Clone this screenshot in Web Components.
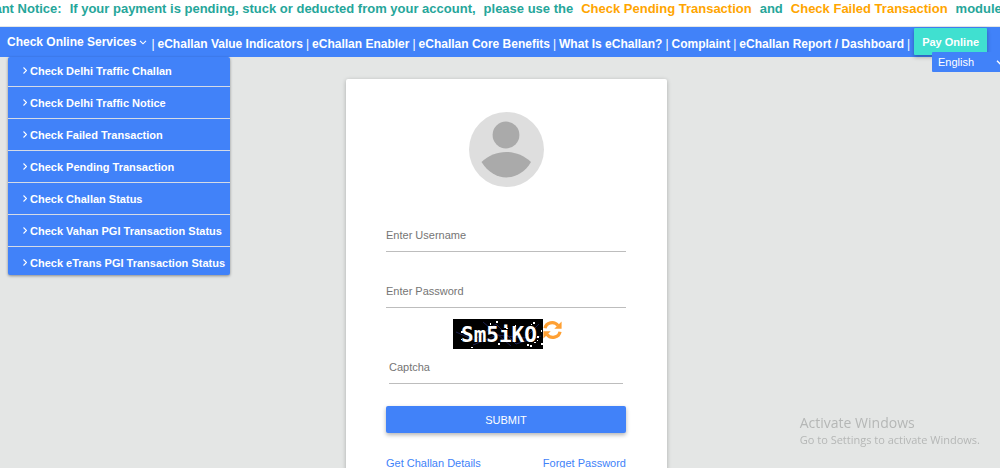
<!DOCTYPE html>
<html lang="en">
<head>
<meta charset="utf-8">
<meta name="viewport" content="width=device-width, initial-scale=1">
<title>eChallan Login</title>
<style>
html, body { margin: 0; height: 100%; }
body { font-family: "Liberation Sans", Arial, sans-serif; font-size: 12px; background: #e4e6e5; overflow: hidden; --blue: #4182f9; }
</style>
</head>
<body>
<echallan-page></echallan-page>
<script>
const define = (name, html, setup) => {
  const t = document.createElement('template');
  t.innerHTML = html;
  customElements.define(name, class extends HTMLElement {
    constructor() {
      super();
      this.attachShadow({ mode: 'open' }).append(t.content.cloneNode(true));
    }
    connectedCallback() { if (setup) setup(this, this.shadowRoot); }
  });
};

define('notice-bar', `
<style>
:host { display: block; height: 27px; background: #fff; color: #26a69a; font-size: 13px; font-weight: bold; line-height: 18px; white-space: nowrap; overflow: hidden; box-sizing: border-box; border-bottom: 1px solid #e4e6e5; }
p { display: flex; gap: 8px; margin: 0 0 0 -46px; }
a { color: #ffa500; text-decoration: none; }
</style>
<p><span>Important Notice:</span><span>If your payment is pending, stuck or deducted from your account,</span><span>please use the</span><a href="#pending">Check Pending Transaction</a><span>and</span><a href="#failed">Check Failed Transaction</a><span>modules</span></p>`);

define('menu-item', `
<style>
:host { display: block; border-bottom: 1px solid #d5dbe6; }
:host(:last-of-type) { border-bottom: 0; }
a { display: flex; align-items: center; gap: 3px; height: 31px; box-sizing: border-box; padding-left: 15px; color: #fff; font-size: 11px; font-weight: bold; text-decoration: none; white-space: nowrap; }
:host(:first-of-type) a { height: 29px; padding-bottom: 2px; }
:host(:last-of-type) a { height: 28px; padding-top: 3px; }
svg { width: 4px; height: 7px; fill: none; stroke: #fff; stroke-width: 1.1; }
</style>
<a href="#service"><svg viewBox="0 0 4 7"><path d="M.5.5l3 3-3 3"/></svg><slot></slot></a>`);

define('services-menu', `
<style>
:host { display: block; position: relative; }
button { display: flex; align-items: center; gap: 3px; border: 0; padding: 0; background: none; color: #fff; font: bold 12px/30px "Liberation Sans", Arial, sans-serif; white-space: nowrap; }
svg { width: 8px; height: 5px; fill: none; stroke: #fff; stroke-width: 1.1; }
nav { position: absolute; top: 30px; left: 1px; width: 222px; background: var(--blue); border-radius: 2px; box-shadow: 0 1px 3px rgba(0,0,0,.4); overflow: hidden; }
</style>
<button type="button" aria-expanded="true">Check Online Services<svg viewBox="0 0 8 5"><path d="M1 .8l3 3 3-3"/></svg></button>
<nav aria-label="Check Online Services">
<menu-item>Check Delhi Traffic Challan</menu-item>
<menu-item>Check Delhi Traffic Notice</menu-item>
<menu-item>Check Failed Transaction</menu-item>
<menu-item>Check Pending Transaction</menu-item>
<menu-item>Check Challan Status</menu-item>
<menu-item>Check Vahan PGI Transaction Status</menu-item>
<menu-item>Check eTrans PGI Transaction Status</menu-item>
</nav>`);

define('nav-link', `
<style>
:host { display: block; }
a { color: #fff; font-weight: bold; text-decoration: none; }
</style>
<a href="#page"><slot></slot></a>`);

define('language-select', `
<style>
:host { display: block; position: absolute; top: 25px; right: -8px; }
div { position: relative; }
select { appearance: none; display: block; width: 76px; height: 20px; margin: 0; padding: 0 6px; border: 0; border-radius: 1px; background: var(--blue); color: #fff; font: 11px "Liberation Sans", Arial, sans-serif; }
svg { position: absolute; right: 4px; top: 8px; width: 8px; height: 5px; fill: none; stroke: #fff; stroke-width: 1.4; pointer-events: none; }
</style>
<div><select aria-label="Language"><option>English</option><option>Hindi</option></select><svg viewBox="0 0 8 5"><path d="M1 .8l3 3 3-3"/></svg></div>`);

define('top-nav', `
<style>
:host { display: flex; position: relative; z-index: 1; height: 30px; padding-left: 7px; background: var(--blue); color: #fff; font-size: 12px; white-space: nowrap; }
.links { display: flex; gap: 3px; line-height: 34px; padding-left: 4px; }
.pay { height: 27px; margin: 1px 0 0 4px; padding: 0 8px; border: 0; border-radius: 1px; background: #40e0d0; color: #fff; font: bold 11px "Liberation Sans", Arial, sans-serif; box-shadow: 0 2px 4px rgba(0,0,0,.3); }
</style>
<services-menu></services-menu>
<div class="links"><span>|</span><nav-link>eChallan Value Indicators</nav-link><span>|</span><nav-link>eChallan Enabler</nav-link><span>|</span><nav-link>eChallan Core Benefits</nav-link><span>|</span><nav-link>What Is eChallan?</nav-link><span>|</span><nav-link>Complaint</nav-link><span>|</span><nav-link>eChallan Report / Dashboard</nav-link><span>|</span></div>
<button class="pay" type="button">Pay Online</button>
<language-select></language-select>`);

define('user-avatar', `
<style>
:host { display: block; }
svg { display: block; width: 75px; height: 75px; margin: 0 auto; }
</style>
<svg viewBox="0 0 75 75" role="img" aria-label="User"><circle cx="37.5" cy="37.5" r="37.5" fill="#dedede"/><circle cx="37" cy="23" r="13.4" fill="#aaa"/><path fill="#aaa" d="M12.5 50C26 36.500 48 36.500 62 50C50 70.500 25 70.500 12.500 50z"/></svg>`);

define('text-field', `
<style>
:host { display: block; }
input { display: block; box-sizing: border-box; width: 100%; height: 36px; margin: 0; padding: 2px 0 0; border: 0; border-bottom: 1px solid #bdbdbd; border-radius: 0; background: none; outline: 0; color: #333; font: 11px "Liberation Sans", Arial, sans-serif; }
:host([compact]) input { height: 35px; padding-top: 1px; }
input::placeholder { color: #757575; opacity: 1; }
</style>
<input>`, (host, root) => {
  const input = root.querySelector('input');
  input.type = host.getAttribute('type') || 'text';
  input.placeholder = host.getAttribute('label');
  input.setAttribute('aria-label', host.getAttribute('label'));
});

define('captcha-image', `
<style>
:host { display: flex; justify-content: center; align-items: flex-start; padding-left: 2px; }
.code { display: block; width: 90px; height: 30px; background: #000; }
.code text { font: bold 21px "DejaVu Sans Mono", monospace; fill: #fff; }
button { border: 0; padding: 0; margin: 0; background: none; line-height: 0; }
button svg { width: 19px; height: 22px; }
</style>
<svg class="code" viewBox="0 0 90 30"><g fill="none" stroke="#1b2050"><path d="M3 13l18 8 22-16 20 20 25-8M20 26l24-10 28 3 14-14M30 3l28 24"/></g><text x="8" y="23">Sm5iKO</text><g fill="#fff"><path d="M8 12h2v2H8zM43 2h2v2h-2zM37 4h1v2h-1zM80 3h2v2h-2zM78 5h1v1h-1zM45 24h2v2h-2zM18 28h2v1h-2zM53 9h2v1h-2zM74 25h2v2h-2zM77 26h2v2h-2zM84 17h2v2h-2zM84 21h1v1h-1zM81 23h2v1h-2zM88 24h2v2h-2zM88 11h1v2h-1zM62 6h1v2h-1zM8 20h1v1H8zM54 21h2v1h-2z"/></g></svg>
<button type="button" aria-label="Refresh captcha"><svg viewBox="0 0 19 22" fill="none" stroke="#ffa033" stroke-width="3.200"><path d="M2 9.300C3 3.500 11 1.500 15 6.500M17 12.700C16 18.500 8 20.500 4 15.500"/><path fill="#ffa033" stroke="none" d="M18.600 2.500v7.300h-7.300zM.400 19.500v-7.300h7.300z"/></svg></button>`);

define('login-card', `
<style>
:host { display: block; box-sizing: border-box; width: 321px; padding: 33px 41px 24px 40px; background: #fff; border-radius: 2px; box-shadow: 0 1px 4px rgba(0,0,0,.25); }
form { display: flex; flex-direction: column; }
.user { margin-top: 29px; }
.pass { margin-top: 20px; }
captcha-image { margin-top: 11px; }
.captcha { margin: 0 3px; }
.submit { height: 27px; margin: 22px 0 0; padding: 0; border: 0; border-radius: 2px; background: var(--blue); color: #fff; font: 11px "Liberation Sans", Arial, sans-serif; text-transform: uppercase; box-shadow: 0 2px 4px rgba(0,0,0,.3); }
.links { display: flex; justify-content: space-between; margin-top: 23px; font-size: 11px; line-height: 14px; }
.links a { color: var(--blue); text-decoration: none; }
</style>
<form>
<user-avatar></user-avatar>
<text-field class="user" label="Enter Username"></text-field>
<text-field class="pass" type="password" label="Enter Password"></text-field>
<captcha-image></captcha-image>
<text-field class="captcha" label="Captcha" compact></text-field>
<button class="submit" type="button">Submit</button>
<div class="links"><a href="#details">Get Challan Details</a><a href="#forget">Forget Password</a></div>
</form>`);

define('activation-notice', `
<style>
:host { display: block; position: fixed; right: 20px; bottom: 21px; color: #b5b7b6; font-family: "Open Sans", "Noto Sans", sans-serif; }
p { margin: 0; }
.title { font-size: 14px; line-height: 18px; }
.text { font-size: 11px; line-height: 15px; }
</style>
<p class="title">Activate Windows</p><p class="text">Go to Settings to activate Windows.</p>`);

define('echallan-page', `
<style>
:host { display: block; }
main { display: flex; justify-content: center; padding: 22px 0 0 13px; }
</style>
<notice-bar></notice-bar>
<top-nav></top-nav>
<main><login-card></login-card></main>
<activation-notice></activation-notice>`);
</script>
</body>
</html>
